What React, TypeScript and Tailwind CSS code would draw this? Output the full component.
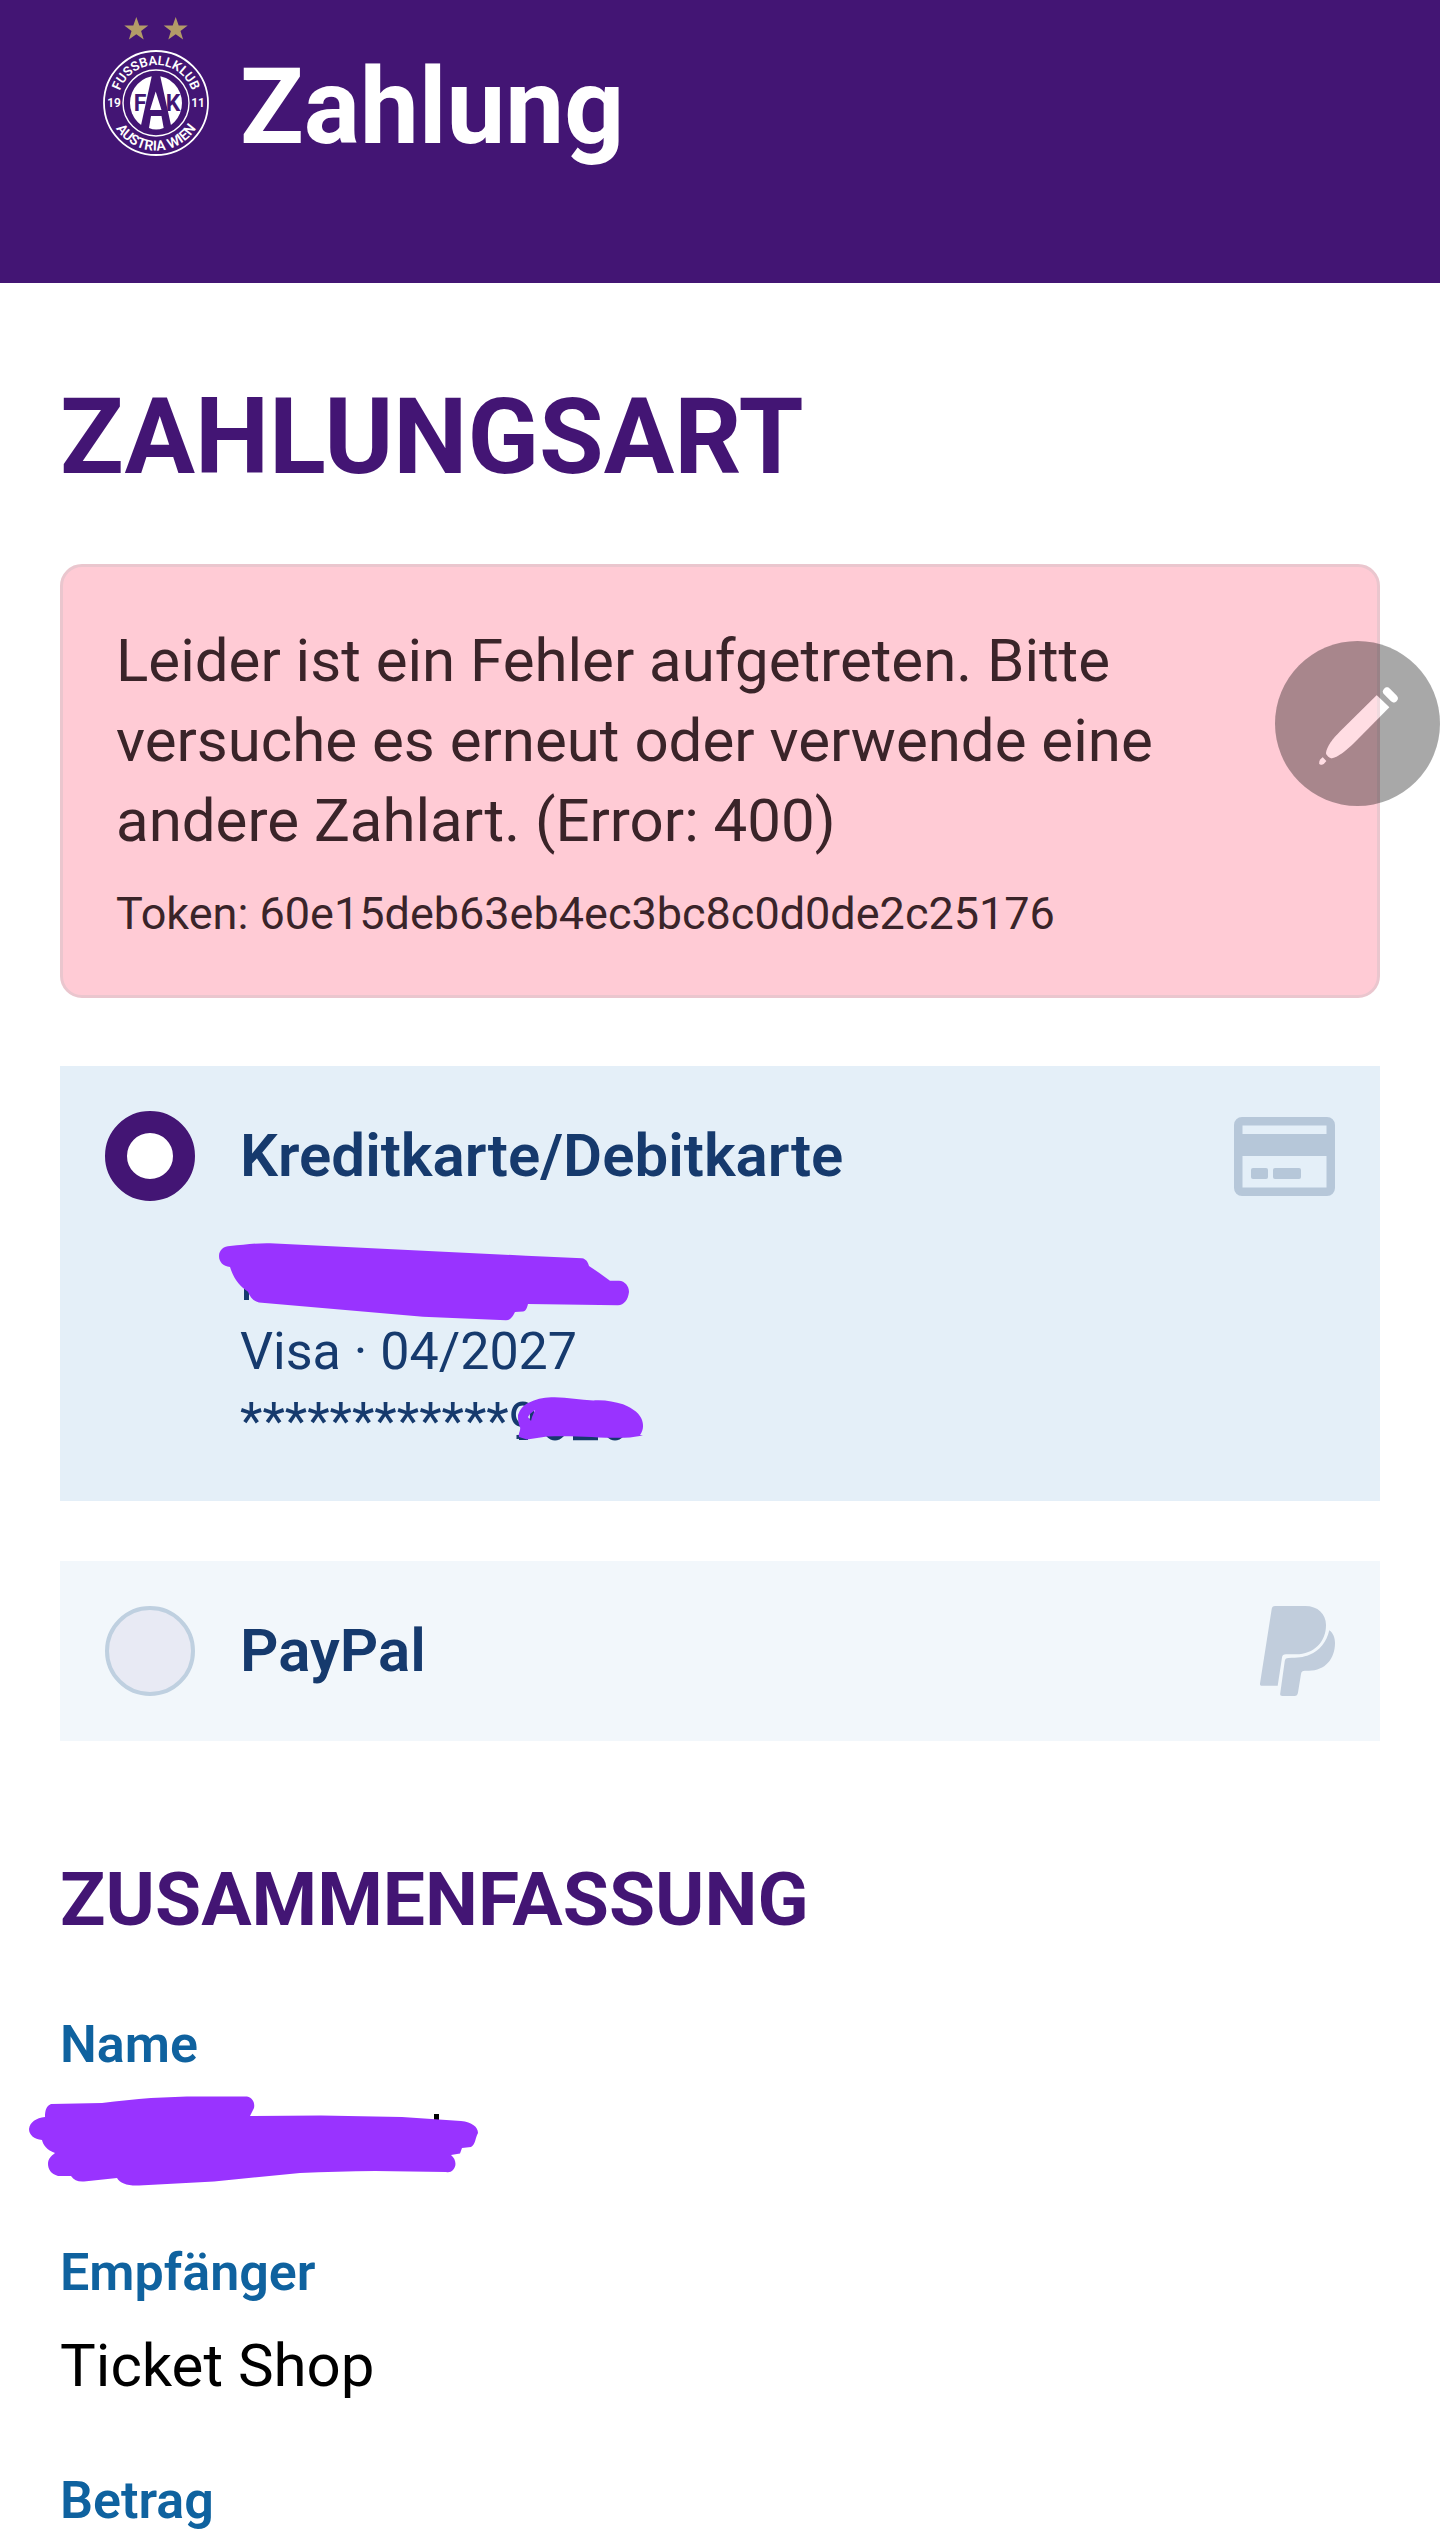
import { useState, type ReactNode } from "react";
import clsx from "clsx";

type MethodId = "card" | "paypal";

const STAR =
  "M0-12.5 3-4H12L4.8 1.4 7.4 10 0 4.8-7.4 10-4.8 1.4-12-4H-3Z";

const ClubLogo = () => (
  <svg
    viewBox="0 0 106 152"
    className="h-[152px] w-[106px] shrink-0 overflow-visible font-[Roboto,sans-serif] font-semibold"
    role="img"
    aria-label="Fussballklub Austria Wien"
  >
    <defs>
      <path id="arc-top" d="M15 87a38 38 0 0 1 76 0" />
      <path id="arc-bottom" d="M5.500 87a47.500 47.500 0 0 0 95 0" />
    </defs>
    <path d={STAR} transform="translate(33.300 13.500)" fill="#b39b68" />
    <path d={STAR} transform="translate(72.700 13.500)" fill="#b39b68" />
    <circle cx="53" cy="87" r="52" fill="none" stroke="#fff" strokeWidth="1.800" />
    <circle cx="53" cy="87" r="33" fill="none" stroke="#fff" strokeWidth="1.400" />
    <ellipse cx="53" cy="87" rx="26" ry="27" fill="#fff" />
    <g fill="#fff" fontSize="13" textAnchor="middle">
      <text>
        <textPath href="#arc-top" startOffset="50%">FUSSBALLKLUB</textPath>
      </text>
      <text fontSize="14">
        <textPath href="#arc-bottom" startOffset="50%">AUSTRIA WIEN</textPath>
      </text>
      <text x="11" y="91" fontSize="12">19</text>
      <text x="95" y="91" fontSize="12">11</text>
    </g>
    {/* central wedge with its two openings */}
    <path d="M49 59H57L69 114H37Z" fill="#431574" />
    <path d="M52.700 75.500 47 94H58.500ZM48 100H58.500L60.700 112Q53 115 46 112Z" fill="#fff" />
    <g fill="#431574" fontSize="23" fontWeight="700" textAnchor="middle">
      <text x="37" y="95">F</text>
      <text x="70" y="95">K</text>
    </g>
  </svg>
);

const CardIcon = () => (
  <svg viewBox="0 0 101 79" className="h-[79px] w-[101px] shrink-0 fill-[#b6c7d9]" aria-hidden="true">
    <path
      fillRule="evenodd"
      d="M8 0H93a8 8 0 0 1 8 8V71a8 8 0 0 1-8 8H8a8 8 0 0 1-8-8V8a8 8 0 0 1 8-8ZM8.500 8.500V17H92.500V8.500ZM8.500 39V70.500H92.500V39Z"
    />
    <rect x="17" y="51" width="17" height="11" rx="2" />
    <rect x="39" y="51" width="28" height="11" rx="2" />
  </svg>
);

const PaypalIcon = () => (
  <svg viewBox="0 0 75 90" className="h-[90px] w-[75px] shrink-0 fill-[#c1cddc]" aria-hidden="true">
    <path d="M15 0H45C58 0 66 8 66 19C66 36 54 48.300 36 48.300H26C23.500 48.300 22.300 49.500 22 51.500L17.700 79.700H2C.500 79.700-.200 79 0 77.500L11.700 3C12 1 13 0 15 0Z" />
    <path d="M69.300 24.300C73 27 75 31.500 75 37C75 53 65 64.700 49 64.700H45C42.500 64.700 41.300 65.500 41 68L38 86.500C37.600 89 36.500 90 34.500 90H22.500C20.800 90 19.900 89.200 20.200 87.500L24.700 55.500C25 53 26 52 28.500 52C38 51.800 43 51.500 49.500 48.800C60 44.500 66.500 36 69.300 24.300Z" />
  </svg>
);

const PenShape = () => (
  <>
    <path d="M112 50.500 118.700 57.300" stroke="currentColor" strokeWidth="8" strokeLinecap="round" />
    <path
      fill="currentColor"
      d="M101.700 54.300 114.300 66.300 80.700 100.300C71 110 63 116 57 117.300C55 117.500 51 114 51 112C52 105 58 97.500 65 90.500Z"
    />
    <path fill="currentColor" d="M47.700 116.300 51.300 120 48.700 123Q46 124.500 44.300 123Q44 120 45.300 118.500Z" />
  </>
);

/** Floating edit button; the pen is cut out of the disc. */
const EditButton = () => (
  <button
    type="button"
    aria-label="Bearbeiten"
    className="absolute top-[641px] right-0 size-[165px] cursor-pointer"
  >
    <svg viewBox="0 0 165 165" className="size-full" fill="none">
      <mask id="pen-cut">
        <rect width="165" height="165" fill="#fff" />
        <g className="text-black">
          <PenShape />
        </g>
      </mask>
      <circle cx="82.500" cy="82.500" r="82.500" fill="#000" fillOpacity="0.340" mask="url(#pen-cut)" />
      <g className="text-white opacity-35">
        <PenShape />
      </g>
    </svg>
  </button>
);

const HolderScribble = () => (
  <svg viewBox="0 0 410 78" className="absolute -top-1 -left-[21px] h-[78px] w-[410px]" aria-hidden="true">
    <path fill="#163a6d" d="M25 42H30V57H25Z" />
    <path
      fill="#9933ff"
      d="M0 13C0 7 5 3 11 3C25 2 35 0 51 .300L307 12.700 363 15.300C367 16 369 19 370 23L380 29.700 391 37.700H400C406 38 410 43 410 49C409 57 405 62 399 62.300L309 61C308 65 307 68 304 68.500L296 69C294 73 292 77 287 77.300L204 73.700 40 59.500C34 58 31 54 29 48.700C21 43 15 37 11 24C4 23 0 19 0 13Z"
    />
  </svg>
);

const NumberScribble = () => (
  <svg viewBox="0 0 126 46" className="absolute top-[10px] left-[278px] h-[46px] w-[126px]" aria-hidden="true">
    <path fill="#163a6d" d="M1 39.500H10V43H1ZM28 39Q37 48 46 39ZM55 38H80V43.300H55ZM88 39Q97 48 106 39Z" />
    <path
      fill="#9933ff"
      fillRule="evenodd"
      d="M0 18C2 12 5 9 9 6.500C18 2 26 0 35 .300C50 0 64 4 79 3.300C88 3 97 5 105 7.300C116 12 122 17 124 23C126 29 125 34 122 38L125 38.500 112 40.500C90 42 60 38 29 39.500L9 42.500 1 40C0 36 3 33 2 30C0 26 0 22 0 18ZM12 17 10 20 13 24 14 20 17 13Z"
    />
  </svg>
);

const NameScribble = () => (
  <svg viewBox="0 0 449 92" className="absolute -top-[3px] -left-[31px] h-[92px] w-[449px]" aria-hidden="true">
    <path fill="#000" d="M405 19H410V26H405Z" />
    <path
      fill="#9933ff"
      d="M16 22C16 16 17 11 22 9L73 8C110 3 145 1 180 1.500L218 1.500C224 3 226 8 225 13L221 21 292 20.500 373 22 432 26C443 27 449 32 449 38C446 43 447 49 442 52L433 53 431 58.500 422 60C427 64 428 71 424 75C422 77 420 77.500 417 77L346 76C320 76 296 77 271 78L185 86.500 110 90.500C98 91 91 88 88 83L55 86.500C49 87 45 85 42 81L29 81C22 79 19 74 19 69C19 64 22 61 26 58C18 55 14 50 13 45C5 44 0 40 0 34C1 27 7 23 16 22Z"
    />
  </svg>
);

interface MethodProps {
  id: MethodId;
  title: string;
  icon: ReactNode;
  selected: boolean;
  onSelect: (id: MethodId) => void;
  children?: ReactNode;
}

const PaymentMethod = ({ id, title, icon, selected, onSelect, children }: MethodProps) => (
  <div className={clsx("p-[45px] text-[#163a6d]", selected ? "bg-[#e4eff8]" : "bg-[#f2f7fb]")}>
    <label htmlFor={id} className="flex cursor-pointer items-center gap-[45px]">
      <input
        id={id}
        type="radio"
        name="method"
        checked={selected}
        onChange={() => onSelect(id)}
        className={clsx(
          "size-[90px] shrink-0 appearance-none rounded-full",
          "border-4 border-[#bfd0e0] bg-[#e8eaf4]",
          "checked:border-[22px] checked:border-[#431574] checked:bg-white",
        )}
      />
      <span className="flex-1 text-[60px] leading-[80px] font-semibold">{title}</span>
      {icon}
    </label>
    {children}
  </div>
);

const SummaryItem = ({ label, children }: { label: string; children?: ReactNode }) => (
  <div className="flex flex-col gap-[18px]">
    <dt className="text-[52px] leading-[70px] font-semibold text-[#0f629f]">{label}</dt>
    {children && <dd className="relative min-h-20 text-[60px] leading-[80px]">{children}</dd>}
  </div>
);

export default function App() {
  const [method, setMethod] = useState<MethodId>("card");

  return (
    <div className="relative min-h-screen bg-white font-[Roboto,sans-serif] text-black">
      <header className="flex items-end gap-[31px] bg-[#431574] pt-4 pr-[60px] pb-[115px] pl-[103px]">
        <ClubLogo />
        <h1 className="text-[105px] leading-[120px] font-bold text-white">Zahlung</h1>
      </header>

      <main className="px-[60px] pt-[95px]">
        <h2 className="text-[105px] leading-[120px] font-bold text-[#431574]">ZAHLUNGSART</h2>

        <div
          role="alert"
          className="mt-[66px] rounded-[22px] border-[3px] border-[#eac6ce] bg-[#ffcbd5] px-[53px] pt-[54px] pb-[51px] text-[#3a2429]"
        >
          <p className="max-w-[1080px] text-[60px] leading-[80px]">
            Leider ist ein Fehler aufgetreten. Bitte versuche es erneut oder verwende eine andere
            Zahlart. (Error: 400)
          </p>
          <p className="mt-[23px] text-[45px] leading-[60px]">Token: 60e15deb63eb4ec3bc8c0d0de2c25176</p>
        </div>

        <div role="radiogroup" aria-label="Zahlungsart" className="mt-[68px] flex flex-col gap-[60px]">
          <PaymentMethod
            id="card"
            title="Kreditkarte/Debitkarte"
            icon={<CardIcon />}
            selected={method === "card"}
            onSelect={setMethod}
          >
            <div className="mt-[46px] ml-[135px] text-[52px] leading-[70px]">
              <div className="relative h-[70px]">
                <HolderScribble />
              </div>
              <p>Visa · 04/2027</p>
              <div className="relative h-[69px]">
                ************9
                <NumberScribble />
              </div>
            </div>
          </PaymentMethod>
          <PaymentMethod
            id="paypal"
            title="PayPal"
            icon={<PaypalIcon />}
            selected={method === "paypal"}
            onSelect={setMethod}
          />
        </div>

        <h3 className="mt-[113px] text-[75px] leading-[90px] font-bold text-[#431574]">
          ZUSAMMENFASSUNG
        </h3>
        <dl className="mt-[66px] flex flex-col gap-[60px]">
          <SummaryItem label="Name">
            <NameScribble />
          </SummaryItem>
          <SummaryItem label="Empfänger">Ticket Shop</SummaryItem>
          <SummaryItem label="Betrag" />
        </dl>
      </main>

      <EditButton />
    </div>
  );
}
